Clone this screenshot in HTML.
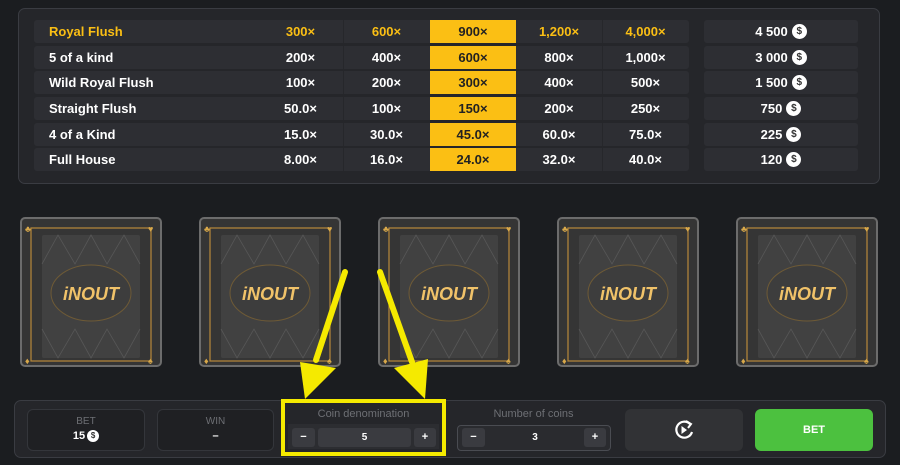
<!DOCTYPE html>
<html><head><meta charset="utf-8"><style>
*{box-sizing:border-box;margin:0;padding:0}
body{width:900px;height:465px;background:#1b1d20;font-family:"Liberation Sans",sans-serif;font-weight:bold;color:#fff;position:relative;overflow:hidden}
.a{position:absolute}
.panel{left:18px;top:8px;width:862px;height:176px;background:#25262a;border:1.5px solid #3a3c42;border-radius:7px}
.row{position:absolute;left:34px;height:23px;width:655px;background:#2d2e33;border-radius:3px}
.name{position:absolute;left:15px;top:4px;font-size:13px}
.c{position:absolute;top:0;height:23px;line-height:23px;text-align:center;font-size:13px}
.yel{background:#fbbf14;color:#222}
.sep{position:absolute;top:0;width:1px;height:23px;background:#26272b}
.pay{position:absolute;left:704px;width:154px;height:23px;background:#2d2e33;border-radius:3px;display:flex;align-items:center;justify-content:center;font-size:13px}
.coin{display:inline-block;width:15px;height:15px;border-radius:50%;background:#fff;color:#333;font-size:10px;line-height:15px;text-align:center;margin-left:4px}
.card{position:absolute;top:217px;width:142px;height:150px;background:#353535;border:2px solid #6c6c6c;border-radius:5px}
.box{position:absolute;background:#1f2023;border:1.5px solid #34363b;border-radius:6px;text-align:center}
.lbl{color:#6d6f74;font-size:10px;font-weight:normal}
</style></head><body>
<div class="a panel"></div>
<div class="row" style="top:20px"><span class="name" style="color:#fbbf14">Royal Flush</span>
<div class="c" style="left:224px;width:85px;color:#fbbf14">300×</div><div class="sep" style="left:309px"></div><div class="c" style="left:309px;width:87px;color:#fbbf14">600×</div><div class="c yel" style="left:396px;width:86px">900×</div><div class="c" style="left:482px;width:86px;color:#fbbf14">1,200×</div><div class="sep" style="left:568px"></div><div class="c" style="left:568px;width:87px;color:#fbbf14">4,000×</div></div>
<div class="row" style="top:46px"><span class="name">5 of a kind</span>
<div class="c" style="left:224px;width:85px">200×</div><div class="sep" style="left:309px"></div><div class="c" style="left:309px;width:87px">400×</div><div class="c yel" style="left:396px;width:86px">600×</div><div class="c" style="left:482px;width:86px">800×</div><div class="sep" style="left:568px"></div><div class="c" style="left:568px;width:87px">1,000×</div></div>
<div class="row" style="top:71px"><span class="name">Wild Royal Flush</span>
<div class="c" style="left:224px;width:85px">100×</div><div class="sep" style="left:309px"></div><div class="c" style="left:309px;width:87px">200×</div><div class="c yel" style="left:396px;width:86px">300×</div><div class="c" style="left:482px;width:86px">400×</div><div class="sep" style="left:568px"></div><div class="c" style="left:568px;width:87px">500×</div></div>
<div class="row" style="top:97px"><span class="name">Straight Flush</span>
<div class="c" style="left:224px;width:85px">50.0×</div><div class="sep" style="left:309px"></div><div class="c" style="left:309px;width:87px">100×</div><div class="c yel" style="left:396px;width:86px">150×</div><div class="c" style="left:482px;width:86px">200×</div><div class="sep" style="left:568px"></div><div class="c" style="left:568px;width:87px">250×</div></div>
<div class="row" style="top:123px"><span class="name">4 of a Kind</span>
<div class="c" style="left:224px;width:85px">15.0×</div><div class="sep" style="left:309px"></div><div class="c" style="left:309px;width:87px">30.0×</div><div class="c yel" style="left:396px;width:86px">45.0×</div><div class="c" style="left:482px;width:86px">60.0×</div><div class="sep" style="left:568px"></div><div class="c" style="left:568px;width:87px">75.0×</div></div>
<div class="row" style="top:148px"><span class="name">Full House</span>
<div class="c" style="left:224px;width:85px">8.00×</div><div class="sep" style="left:309px"></div><div class="c" style="left:309px;width:87px">16.0×</div><div class="c yel" style="left:396px;width:86px">24.0×</div><div class="c" style="left:482px;width:86px">32.0×</div><div class="sep" style="left:568px"></div><div class="c" style="left:568px;width:87px">40.0×</div></div>
<div class="pay" style="top:20px">4 500<span class="coin">$</span></div>
<div class="pay" style="top:46px">3 000<span class="coin">$</span></div>
<div class="pay" style="top:71px">1 500<span class="coin">$</span></div>
<div class="pay" style="top:97px">750<span class="coin">$</span></div>
<div class="pay" style="top:123px">225<span class="coin">$</span></div>
<div class="pay" style="top:148px">120<span class="coin">$</span></div>

<svg width="0" height="0" style="position:absolute"><defs>
<g id="cb">
<rect x="9" y="9" width="120" height="133" fill="none" stroke="#b8893a" stroke-width="1.2"/>
<rect x="20" y="16" width="98" height="123" fill="#414141" rx="2"/>
<path d="M20 45 L36 16 L53 45 L69 16 L85 45 L102 16 L118 45 M20 110 L36 139 L53 110 L69 139 L85 110 L102 139 L118 110" stroke="#575757" fill="none" stroke-width="0.8"/>
<ellipse cx="69" cy="74" rx="40" ry="28" fill="#3d3d3d" stroke="#6e5a36" stroke-width="1"/>
<text x="69" y="81" text-anchor="middle" font-family="Liberation Sans" font-weight="bold" font-style="italic" font-size="18" fill="#f0c269">iNOUT</text>
<text x="3" y="13" font-size="9" fill="#d8a84a">♣</text><text x="126" y="13" font-size="9" fill="#d8a84a">♥</text>
<text x="3" y="145" font-size="9" fill="#d8a84a">♦</text><text x="126" y="145" font-size="9" fill="#d8a84a">♠</text>
</g></defs></svg>
<div class="card" style="left:20px"><svg width="138" height="146"><use href="#cb"/></svg></div>
<div class="card" style="left:199px"><svg width="138" height="146"><use href="#cb"/></svg></div>
<div class="card" style="left:378px"><svg width="138" height="146"><use href="#cb"/></svg></div>
<div class="card" style="left:557px"><svg width="138" height="146"><use href="#cb"/></svg></div>
<div class="card" style="left:736px"><svg width="138" height="146"><use href="#cb"/></svg></div>

<div class="a" style="left:14px;top:400px;width:872px;height:58px;background:#25262a;border:1.5px solid #3a3c42;border-radius:7px"></div>
<div class="box" style="left:27px;top:409px;width:118px;height:42px"><div class="lbl" style="margin-top:6px">BET</div><div style="font-size:11px;margin-top:3px;display:flex;justify-content:center;align-items:center">15<span class="coin" style="width:12px;height:12px;line-height:12px;font-size:8px;margin-left:2px">$</span></div></div>
<div class="box" style="left:157px;top:409px;width:117px;height:42px"><div class="lbl" style="margin-top:6px">WIN</div><div style="font-size:11px;margin-top:3px">–</div></div>
<div class="a" style="left:281px;top:399px;width:165px;height:57px;border:4px solid #f5ea00;background:#25262a"></div>
<div class="a lbl" style="left:285px;top:408px;width:157px;text-align:center;font-size:11px">Coin denomination</div>
<div class="a" style="left:288px;top:424px;width:151px;height:25px;background:#2c2d31"></div>
<div class="a" style="left:292px;top:428px;width:23px;height:19px;background:#3a3b40;border-radius:3px;text-align:center;font-size:11px;line-height:19px">−</div>
<div class="a" style="left:318px;top:428px;width:93px;height:19px;background:#3a3b40;border-radius:3px;text-align:center;font-size:10px;line-height:19px">5</div>
<div class="a" style="left:414px;top:428px;width:22px;height:19px;background:#3a3b40;border-radius:3px;text-align:center;font-size:11px;line-height:19px">+</div>
<div class="a lbl" style="left:455px;top:408px;width:157px;text-align:center;font-size:11px">Number of coins</div>
<div class="a" style="left:457px;top:425px;width:154px;height:26px;border:1.5px solid #4a4c52;border-radius:4px;background:#2a2b2f"></div>
<div class="a" style="left:462px;top:428px;width:23px;height:19px;background:#3a3b40;border-radius:3px;text-align:center;font-size:11px;line-height:19px">−</div>
<div class="a" style="left:490px;top:428px;width:90px;height:19px;text-align:center;font-size:10px;line-height:19px">3</div>
<div class="a" style="left:584px;top:428px;width:22px;height:19px;background:#3a3b40;border-radius:3px;text-align:center;font-size:11px;line-height:19px">+</div>
<div class="a" style="left:625px;top:409px;width:118px;height:42px;background:#313235;border-radius:6px"></div>
<svg class="a" style="left:672px;top:418px" width="24" height="24" viewBox="0 0 24 24"><path d="M18 6 A8 8 0 1 0 20 14" fill="none" stroke="#fff" stroke-width="2.2"/><path d="M14 3 L19 6 L16 10" fill="none" stroke="#fff" stroke-width="2"/><path d="M9.5 8 L15 12 L9.5 16Z" fill="#fff"/></svg>
<div class="a" style="left:755px;top:409px;width:118px;height:42px;background:#4cc13f;border-radius:6px;text-align:center;line-height:42px;font-size:11px">BET</div>

<svg class="a" style="left:0;top:0" width="900" height="465">
<line x1="345" y1="272" x2="316" y2="360" stroke="#f5ea00" stroke-width="6" stroke-linecap="round"/>
<polygon points="300,362 336,368 305,399" fill="#f5ea00"/>
<line x1="380" y1="272" x2="412" y2="362" stroke="#f5ea00" stroke-width="6" stroke-linecap="round"/>
<polygon points="394,368 428,359 425,399" fill="#f5ea00"/>
</svg>
</body></html>
